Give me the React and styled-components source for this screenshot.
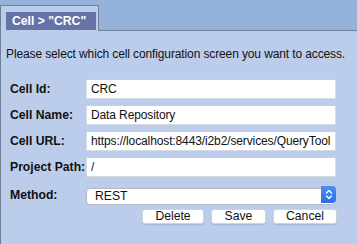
import React from "react";
import styled, { createGlobalStyle } from "styled-components";

const GlobalStyle = createGlobalStyle`
  html, body {
    margin: 0;
    padding: 0;
    background: #bccdec;
    font-family: "Liberation Sans", Arial, sans-serif;
  }
`;

const Page = styled.div`
  width: 357px;
  height: 244px;
  overflow: hidden;
  display: flex;
  flex-direction: column;
`;

const TabStrip = styled.div`
  background: #95b3da;
  padding-top: 5px;
  display: flex;
`;

const Tab = styled.div`
  position: relative;
  z-index: 1;
  margin-bottom: -1px;
  width: 90px;
  padding: 6px 2px 1px 5px;
  background: #bccdec;
  border: 1px solid #6f7f97;
  border-bottom: none;
`;

const TabLabel = styled.div`
  background: #6673a7;
  color: #ffffff;
  font-weight: bold;
  font-size: 12.2px;
  line-height: 18px;
  height: 18px;
  padding-left: 6px;
  white-space: nowrap;
`;

const Panel = styled.div`
  flex: 1;
  background: #bccdec;
  border-top: 1px solid #6f7f97;
  border-left: 1px solid #6f7f97;
  padding: 16px 0 0 5px;
`;

const Intro = styled.p`
  margin: 0;
  font-size: 12px;
  letter-spacing: -0.12px;
  line-height: 15px;
  color: #111;
  white-space: nowrap;
`;

const Form = styled.div`
  display: grid;
  grid-template-columns: 76px 250px;
  row-gap: 6px;
  align-items: center;
  margin: 17px 0 0 4px;
`;

const Label = styled.label`
  font-size: 12.2px;
  font-weight: bold;
  color: #111;
  white-space: nowrap;
  margin-top: ${(p) => (p.$shift ? "3px" : "0")};
`;

const Input = styled.input`
  box-sizing: border-box;
  height: 20px;
  width: 250px;
  border: 1px solid #d6dbe4;
  border-top-color: #c9ced8;
  background: #fff;
  font-family: "Liberation Sans", Arial, sans-serif;
  font-size: 12px;
  letter-spacing: -0.12px;
  color: #111;
  padding: 0 3px 0 4px;
  outline: none;
`;

const SelectWrap = styled.div`
  position: relative;
  width: 250px;
  height: 17px;
  margin-top: 3px;
`;

const Select = styled.select`
  appearance: none;
  box-sizing: border-box;
  width: 100%;
  height: 17px;
  border: 1px solid #b4b9c2;
  border-radius: 4px;
  background: #fff;
  font-family: "Liberation Sans", Arial, sans-serif;
  font-size: 12.2px;
  color: #111;
  padding: 0 0 0 8px;
  outline: none;
`;

const Arrow = styled.div`
  position: absolute;
  top: 0;
  right: 0;
  width: 15px;
  height: 17px;
  border-radius: 0 4px 4px 0;
  background: linear-gradient(#4d8ff6, #2a6ded);
  display: flex;
  align-items: center;
  justify-content: center;
  pointer-events: none;
`;

const Buttons = styled.div`
  display: flex;
  justify-content: flex-end;
  gap: 7px;
  width: 327px;
  margin: 6px 0 0 4px;
`;

const Button = styled.button`
  box-sizing: border-box;
  width: ${(p) => p.w}px;
  height: 15px;
  padding: 0;
  background: #fff;
  border: 1px solid #cfd3da;
  border-radius: 3px;
  box-shadow: 0 1px 1px rgba(0, 0, 0, 0.12);
  font-family: "Liberation Sans", Arial, sans-serif;
  font-size: 12.2px;
  line-height: 13px;
  color: #111;
`;

const rows = [
  ["Cell Id:", "CRC"],
  ["Cell Name:", "Data Repository"],
  ["Cell URL:", "https://localhost:8443/i2b2/services/QueryTool"],
  ["Project Path:", "/"],
];

export default function App() {
  return (
    <Page>
      <GlobalStyle />
      <TabStrip>
        <Tab>
          <TabLabel>Cell &gt; "CRC"</TabLabel>
        </Tab>
      </TabStrip>
      <Panel>
        <Intro>Please select which cell configuration screen you want to access.</Intro>
        <Form>
          {rows.map(([label, value]) => (
            <React.Fragment key={label}>
              <Label>{label}</Label>
              <Input defaultValue={value} />
            </React.Fragment>
          ))}
          <Label $shift>Method:</Label>
          <SelectWrap>
            <Select defaultValue="REST">
              <option>REST</option>
              <option>SOAP</option>
            </Select>
            <Arrow>
              <svg width="8" height="11" viewBox="0 0 8 11" fill="none" stroke="#fff" strokeWidth="1.4" strokeLinecap="round" strokeLinejoin="round">
                <path d="M1.5 4 L4 1.5 L6.5 4" />
                <path d="M1.5 7 L4 9.5 L6.5 7" />
              </svg>
            </Arrow>
          </SelectWrap>
        </Form>
        <Buttons>
          <Button w={62}>Delete</Button>
          <Button w={55}>Save</Button>
          <Button w={64}>Cancel</Button>
        </Buttons>
      </Panel>
    </Page>
  );
}
